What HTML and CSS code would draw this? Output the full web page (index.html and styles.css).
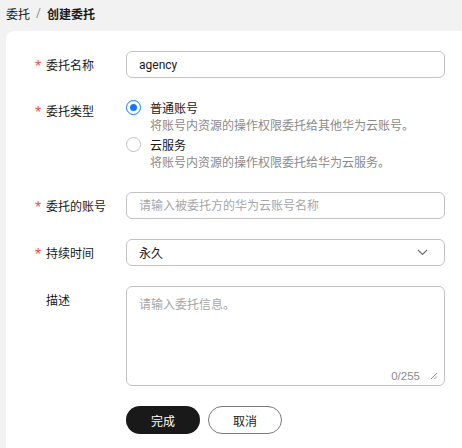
FILE: index.html
```html
<!DOCTYPE html>
<html lang="zh-CN">
<head>
<meta charset="utf-8">
<title>创建委托</title>
<link rel="stylesheet" href="styles.css">
</head>
<body>
<div class="breadcrumb">
  <span class="crumb">委托</span>
  <span class="sep">/</span>
  <span class="crumb current">创建委托</span>
</div>
<main class="card">
  <form class="form">
    <div class="row">
      <label class="label"><span class="star">*</span>委托名称</label>
      <div class="control">
        <input class="input" type="text" value="agency">
      </div>
    </div>
    <div class="row">
      <label class="label label-group"><span class="star">*</span>委托类型</label>
      <div class="control radio-group">
        <div class="option">
          <div class="radio-line"><span class="radio checked"></span><span class="radio-text">普通账号</span></div>
          <div class="radio-desc">将账号内资源的操作权限委托给其他华为云账号。</div>
        </div>
        <div class="option">
          <div class="radio-line"><span class="radio"></span><span class="radio-text">云服务</span></div>
          <div class="radio-desc">将账号内资源的操作权限委托给华为云服务。</div>
        </div>
      </div>
    </div>
    <div class="row">
      <label class="label"><span class="star">*</span>委托的账号</label>
      <div class="control">
        <input class="input" type="text" placeholder="请输入被委托方的华为云账号名称">
      </div>
    </div>
    <div class="row">
      <label class="label"><span class="star">*</span>持续时间</label>
      <div class="control">
        <div class="select">
          <span class="select-value">永久</span>
          <svg class="chevron" width="11" height="7" viewBox="0 0 11 7"><path d="M1 1 L5.5 5.5 L10 1" fill="none" stroke="#6e6e6e" stroke-width="1.1"/></svg>
        </div>
      </div>
    </div>
    <div class="row">
      <label class="label"><span class="star"></span>描述</label>
      <div class="control">
        <div class="textarea-wrap">
          <textarea class="textarea" placeholder="请输入委托信息。"></textarea>
          <span class="counter">0/255</span>
          <svg class="resize" width="8" height="8" viewBox="0 0 8 8"><path d="M7 1 L1 7 M7 4.5 L4.5 7" fill="none" stroke="#8a8a8a" stroke-width="1"/></svg>
        </div>
      </div>
    </div>
    <div class="row actions">
      <div class="label"></div>
      <div class="control buttons">
        <button type="button" class="btn btn-primary">完成</button>
        <button type="button" class="btn btn-default">取消</button>
      </div>
    </div>
  </form>
</main>
</body>
</html>
```
FILE: styles.css
```css
html, body {
  margin: 0;
  height: 100%;
  overflow: hidden;
}
body {
  background: #f2f2f2;
  font-family: Roboto, "Noto Sans CJK SC", sans-serif;
  font-size: 12px;
  color: #191919;
}
.breadcrumb {
  height: 31px;
  display: flex;
  align-items: center;
  padding: 0 6px 5px;
  box-sizing: border-box;
  gap: 6px;
}
.crumb { color: #191919; }
.crumb.current { font-weight: 700; }
.sep { color: #8a8a8a; }
.card {
  margin-left: 6px;
  background: #fff;
  border-radius: 8px 0 0 0;
  min-height: calc(100% - 31px);
  padding-top: 20px;
  box-sizing: border-box;
}
.row {
  display: flex;
  align-items: flex-start;
  margin-bottom: 20px;
}
.label {
  width: 91px;
  padding-left: 29px;
  flex: none;
  display: flex;
  align-items: center;
  height: 27px;
  color: #191919;
}
.label-group { height: 24px; }
.star {
  width: 11px;
  flex: none;
  color: #f0524a;
  font-family: "Liberation Sans", Arial, sans-serif;
  font-size: 16px;
  line-height: 1;
  padding-top: 5px;
}
.control {
  width: 319px;
}
.input, .select, .textarea-wrap {
  box-sizing: border-box;
  width: 100%;
  border: 1px solid #c2c2c2;
  border-radius: 6px;
  background: #fff;
}
.input {
  display: block;
  height: 27px;
  padding: 0 12px;
  font: inherit;
  color: #191919;
  outline: none;
}
.input::placeholder, .textarea::placeholder { color: #a6a6a6; }
.radio-group {
  display: flex;
  flex-direction: column;
}
.radio-line {
  display: flex;
  align-items: center;
  height: 19px;
  gap: 9px;
}
.radio {
  width: 15px;
  height: 15px;
  box-sizing: border-box;
  border: 1px solid #c2c2c2;
  border-radius: 50%;
  display: flex;
  align-items: center;
  justify-content: center;
}
.radio.checked { border-color: #1476ff; }
.radio.checked::after {
  content: "";
  width: 7px;
  height: 7px;
  border-radius: 50%;
  background: #1476ff;
}
.radio-desc {
  padding-left: 24px;
  line-height: 18px;
  color: #8a8a8a;
}
.select {
  height: 27px;
  display: flex;
  align-items: center;
  justify-content: space-between;
  padding: 0 16px 0 12px;
}
.textarea-wrap {
  position: relative;
  height: 100px;
}
.textarea {
  box-sizing: border-box;
  width: 100%;
  height: 100%;
  border: none;
  resize: none;
  padding: 8px 12px;
  font: inherit;
  background: transparent;
  outline: none;
}
.counter {
  position: absolute;
  right: 24px;
  bottom: 3px;
  color: #8a8a8a;
  font-size: 11.5px;
  font-family: "Liberation Sans", Arial, sans-serif;
}
.resize {
  position: absolute;
  right: 6px;
  bottom: 5px;
}
.buttons {
  display: flex;
  gap: 8px;
}
.btn {
  width: 74px;
  height: 28px;
  border-radius: 14px;
  font: inherit;
  cursor: pointer;
  box-sizing: border-box;
}
.btn-primary {
  background: #191919;
  color: #fff;
  border: none;
}
.btn-default {
  background: #fff;
  color: #191919;
  border: 1px solid #7a7a7a;
}
```
